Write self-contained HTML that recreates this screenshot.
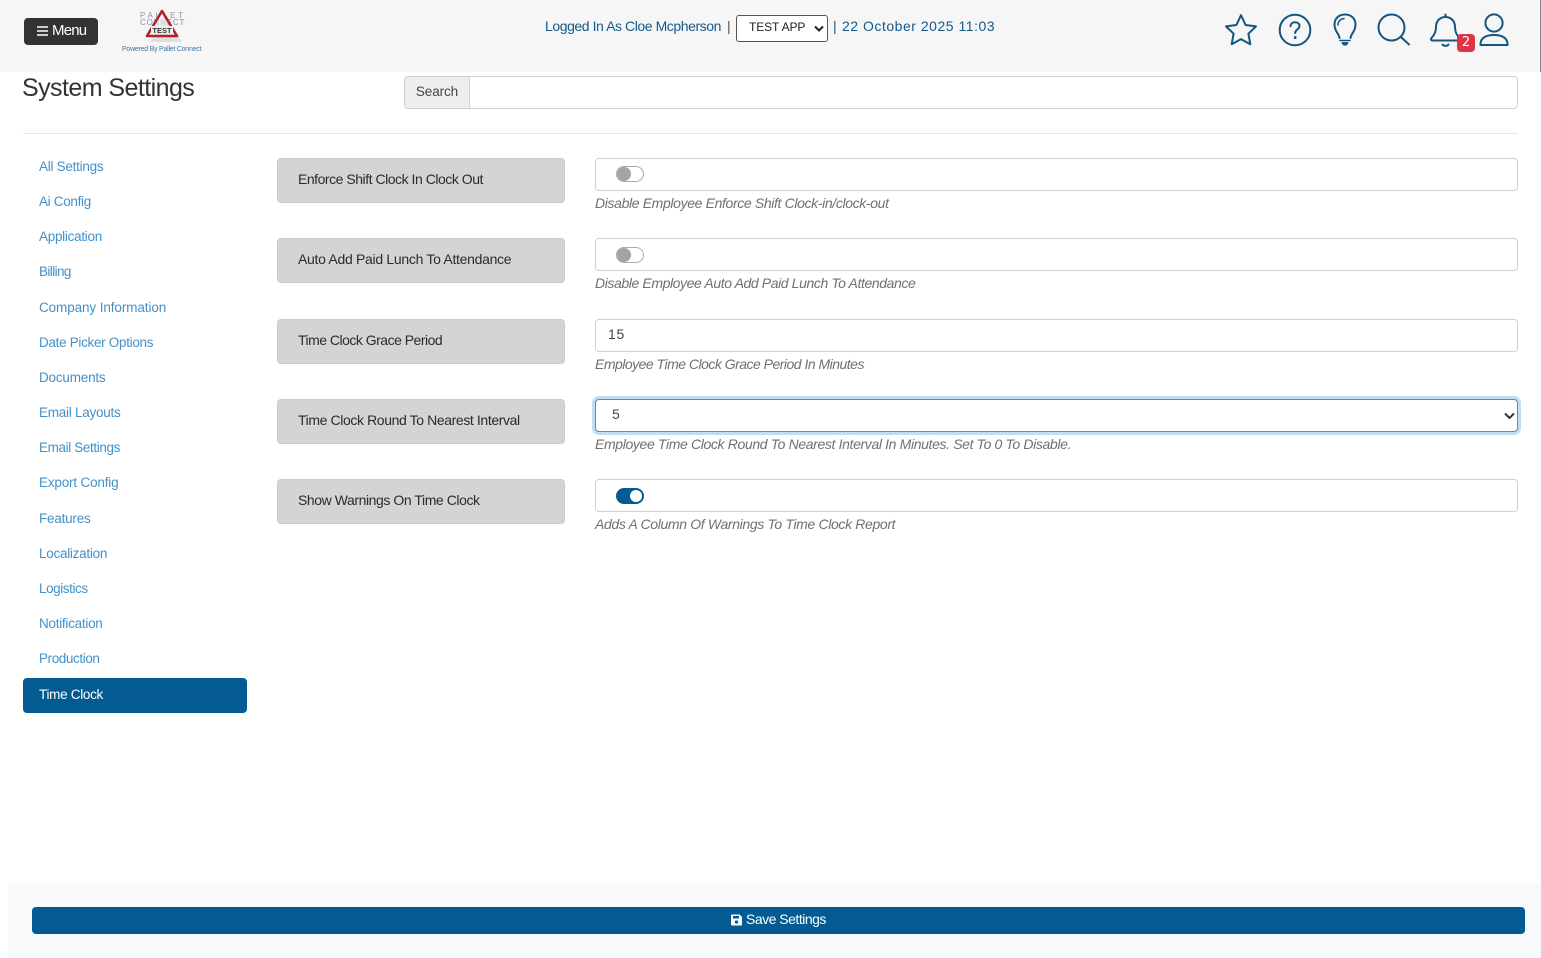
<!DOCTYPE html>
<html><head><meta charset="utf-8"><title>System Settings</title>
<style>
html,body{margin:0;padding:0;background:#fff}
body{width:1541px;height:958px;position:relative;overflow:hidden;font-family:"Liberation Sans",sans-serif;color:#333}
.a{position:absolute;white-space:nowrap}
.nav{position:absolute;left:39px;font-size:13.5px;line-height:18px;color:#4391c8;letter-spacing:-.1px}
.lab{position:absolute;left:277px;width:288px;height:45px;box-sizing:border-box;background:#d4d4d4;border:1px solid #ccc;border-radius:4px;font-size:14px;line-height:41px;padding-left:20px;color:#2b2b2b;letter-spacing:-.25px}
.box{position:absolute;left:595px;width:923px;height:33px;box-sizing:border-box;background:#fff;border:1px solid #d0d0d0;border-radius:4px}
.hint{position:absolute;left:595px;font-size:14px;line-height:18px;font-style:italic;color:#707070;letter-spacing:-.2px;white-space:nowrap}
.tg{position:absolute;left:20px;top:7px;width:28px;height:16px;box-sizing:border-box;border:1px solid #aaa;border-radius:8px;background:#fff}
.tg i{position:absolute;left:0;top:0;width:14px;height:14px;border-radius:50%;background:#a3a3a3}
.tg.on{background:#035b91;border-color:#035b91}
.tg.on i{left:13px;top:1px;width:12px;height:12px;background:#fff}
svg.ic{position:absolute;fill:none;stroke:#14557f;stroke-width:2;stroke-linecap:round;stroke-linejoin:round}
</style></head><body>
<div class="a" style="left:0;top:0;width:1541px;height:72px;background:#f6f6f6"></div>
<div class="a" style="left:1540px;top:0;width:1px;height:72px;background:#888"></div>

<div class="a" style="left:24px;top:18px;width:74px;height:27px;background:#333;border-radius:4px;color:#fff;font-size:15px;line-height:25px;letter-spacing:-.8px">
<svg style="position:absolute;left:13px;top:8px" width="11" height="10" viewBox="0 0 11 10"><path d="M0 1h11M0 5h11M0 9h11" stroke="#fff" stroke-width="1.4"/></svg>
<span style="position:absolute;left:28px;top:0">Menu</span></div>

<div class="a" style="left:140px;top:11px;font-size:8px;letter-spacing:2.8px;line-height:9px;color:#8b97a5">PALLET</div>
<div class="a" style="left:140px;top:18px;font-size:8px;letter-spacing:.8px;line-height:9px;color:#7b93ab">CONNECT</div>
<svg class="a" style="left:138px;top:6px" width="50" height="42" viewBox="0 0 50 42">
<path d="M26 7L42 34H10Z" fill="#aaa" opacity=".3" transform="translate(2,2)"/>
<path d="M24 5L39 30H9Z" fill="#f1f1f1" fill-opacity=".55" stroke="#b3202f" stroke-width="2.6" stroke-linejoin="round"/>
<rect x="13" y="20" width="22" height="7" fill="#efefef"/>
<text x="24" y="27" text-anchor="middle" font-family="Liberation Sans,sans-serif" font-size="7.5" font-weight="700" fill="#333">TEST</text></svg>
<div class="a" style="left:122px;top:45px;font-size:7px;line-height:9px;color:#3f77a6;letter-spacing:-.24px">Powered By Pallet Connect</div>

<div class="a" style="left:545px;top:17px;font-size:14px;line-height:18px;color:#14598a;letter-spacing:-.43px">Logged In As Cloe Mcpherson</div>
<div class="a" style="left:727px;top:17px;font-size:14px;line-height:18px;color:#555">|</div>
<div class="a" style="left:736px;top:15px;width:92px;height:27px;box-sizing:border-box;background:#fff;border:1px solid #555;border-radius:3px;font-size:12px;line-height:22px;padding-left:12px;color:#222;letter-spacing:-.1px">TEST APP
<svg style="position:absolute;left:77px;top:9px" width="10" height="8" viewBox="0 0 10 8"><path d="M1 1.5L5 5.5L9 1.5" fill="none" stroke="#222" stroke-width="2"/></svg></div>
<div class="a" style="left:833px;top:17px;font-size:14px;line-height:18px;color:#14598a">|</div>
<div class="a" style="left:842px;top:17px;font-size:14px;line-height:18px;color:#14598a;letter-spacing:.52px">22 October 2025 11:03</div>

<svg class="ic" style="left:1223px;top:12px" width="36" height="36" viewBox="0 0 36 36"><path d="M18 3.2L22.6 13L33 14.4L25.4 21.7L27.3 32.2L18 27.1L8.7 32.2L10.6 21.7L3 14.4L13.4 13Z"/></svg>
<svg class="ic" style="left:1278px;top:13px" width="34" height="34" viewBox="0 0 34 34"><circle cx="17" cy="17" r="15.3"/><path d="M12.5 13.2C12.7 10.5 14.6 9.3 17 9.3C19.6 9.3 21.5 10.8 21.5 13.1C21.5 16.3 17.2 16.4 17.2 20"/><path d="M17.2 24.3v.4" stroke-width="2.6"/></svg>
<svg class="ic" style="left:1330px;top:12px" width="30" height="36" viewBox="0 0 30 36"><path d="M9.5 26C9 21.5 4.5 19.5 4.5 12.5C4.5 6.5 8.8 2.5 15 2.5C21.2 2.5 25.5 6.5 25.5 12.5C25.5 19.5 21 21.5 20.5 26"/><path d="M8 13C8 9.5 10.5 6.8 14 6.5" stroke-width="1.5"/><path d="M10 28.5H20" stroke-width="1.6"/><path d="M12 30.5H18C17.8 32.3 16.6 33.2 15 33.2C13.4 33.2 12.2 32.3 12 30.5Z" fill="#14557f" stroke-width=".8"/></svg>
<svg class="ic" style="left:1375px;top:12px" width="38" height="36" viewBox="0 0 38 36"><circle cx="16.5" cy="15.5" r="13"/><path d="M26 25L34 32.5"/></svg>
<svg class="ic" style="left:1429px;top:13px" width="34" height="36" viewBox="0 0 34 36"><path d="M16.5 1.5V4"/><path d="M2 26C2 24.2 7 22.5 7 14C7 8 11 4 16.5 4C22 4 26 8 26 14C26 22.5 31 24.2 31 26C31 27 30.5 27.5 29.5 27.5H3.5C2.5 27.5 2 27 2 26Z"/><path d="M13.5 31.5C14.5 33.3 18.5 33.3 19.5 31.5"/></svg>
<div class="a" style="left:1457px;top:34px;width:18px;height:18px;background:#dc3545;border-radius:4px;color:#fff;font-size:13px;line-height:18px;text-align:center;font-family:'DejaVu Sans',sans-serif">2</div>
<svg class="ic" style="left:1478px;top:12px" width="32" height="36" viewBox="0 0 32 36"><circle cx="16" cy="11" r="8.6"/><path d="M2.5 33C2 26 8 23 16 23C24 23 30 26 29.5 33Z"/></svg>

<div class="a" style="left:22px;top:72px;font-size:25px;line-height:32px;color:#333;letter-spacing:-.56px">System Settings</div>

<div class="a" style="left:404px;top:76px;width:66px;height:33px;box-sizing:border-box;background:#eee;border:1px solid #d0d0d0;border-radius:4px 0 0 4px;font-size:13.5px;line-height:29px;text-align:center;color:#444;letter-spacing:-.1px">Search</div>
<div class="a" style="left:469px;top:76px;width:1049px;height:33px;box-sizing:border-box;background:#fff;border:1px solid #d0d0d0;border-radius:0 4px 4px 0"></div>
<div class="a" style="left:23px;top:133px;width:1495px;height:1px;background:#e6e6e6"></div>

<div class="nav" style="top:158px;letter-spacing:-.27px">All Settings</div>
<div class="nav" style="top:193px;letter-spacing:-.32px">Ai Config</div>
<div class="nav" style="top:228px;letter-spacing:-.28px">Application</div>
<div class="nav" style="top:263px;letter-spacing:-.6px">Billing</div>
<div class="nav" style="top:299px">Company Information</div>
<div class="nav" style="top:334px;letter-spacing:-.31px">Date Picker Options</div>
<div class="nav" style="top:369px;letter-spacing:-.2px">Documents</div>
<div class="nav" style="top:404px;letter-spacing:-.25px">Email Layouts</div>
<div class="nav" style="top:439px;letter-spacing:-.38px">Email Settings</div>
<div class="nav" style="top:474px;letter-spacing:-.18px">Export Config</div>
<div class="nav" style="top:510px;letter-spacing:-.22px">Features</div>
<div class="nav" style="top:545px;letter-spacing:-.27px">Localization</div>
<div class="nav" style="top:580px;letter-spacing:-.43px">Logistics</div>
<div class="nav" style="top:615px;letter-spacing:-.27px">Notification</div>
<div class="nav" style="top:650px;letter-spacing:-.4px">Production</div>
<div class="a" style="left:23px;top:678px;width:224px;height:35px;background:#035b91;border-radius:4px"></div>
<div class="nav" style="top:686px;color:#fff;letter-spacing:-.3px">Time Clock</div>

<div class="lab" style="top:158px;letter-spacing:-.47px">Enforce Shift Clock In Clock Out</div>
<div class="box" style="top:158px"><span class="tg"><i></i></span></div>
<div class="hint" style="top:194px;letter-spacing:-.36px">Disable Employee Enforce Shift Clock-in/clock-out</div>

<div class="lab" style="top:238px;letter-spacing:-.3px">Auto Add Paid Lunch To Attendance</div>
<div class="box" style="top:238px"><span class="tg" style="top:8px"><i></i></span></div>
<div class="hint" style="top:274px;letter-spacing:-.4px">Disable Employee Auto Add Paid Lunch To Attendance</div>

<div class="lab" style="top:319px;letter-spacing:-.51px">Time Clock Grace Period</div>
<div class="box" style="top:319px;font-size:14px;line-height:29px;padding-left:12px;color:#444;letter-spacing:.7px">15</div>
<div class="hint" style="top:355px;letter-spacing:-.51px">Employee Time Clock Grace Period In Minutes</div>

<div class="lab" style="top:399px;letter-spacing:-.39px">Time Clock Round To Nearest Interval</div>
<div class="box" style="top:399px;border-color:#4b93b8;box-shadow:0 0 0 3px #c0ddf2;font-size:14px;line-height:29px;padding-left:16px;color:#444">5
<svg style="position:absolute;left:908px;top:12px" width="11" height="9" viewBox="0 0 11 9"><path d="M1 1.5L5.5 6L10 1.5" fill="none" stroke="#333" stroke-width="2"/></svg></div>
<div class="hint" style="top:435px;letter-spacing:-.36px">Employee Time Clock Round To Nearest Interval In Minutes. Set To 0 To Disable.</div>

<div class="lab" style="top:479px;letter-spacing:-.43px">Show Warnings On Time Clock</div>
<div class="box" style="top:479px"><span class="tg on" style="top:8px"><i></i></span></div>
<div class="hint" style="top:515px;letter-spacing:-.35px">Adds A Column Of Warnings To Time Clock Report</div>

<div class="a" style="left:8px;top:883px;width:1533px;height:75px;background:#f8f9fa"></div>
<div class="a" style="left:32px;top:907px;width:1493px;height:27px;background:#035b91;border-radius:4px"></div>
<svg class="a" style="left:731px;top:914px" width="11" height="12" viewBox="0 0 11 12"><path d="M1 0.5H8.5L11 3V10.5C11 11.1 10.6 11.5 10 11.5H1C.4 11.5 0 11.1 0 10.5V1.5C0 .9.4.5 1 .5Z" fill="#fff"/><rect x="2" y="2" width="6" height="2.5" fill="#035b91"/><circle cx="5.5" cy="8" r="1.6" fill="#035b91"/></svg>
<div class="a" style="left:746px;top:910px;font-size:14px;line-height:18px;color:#fff;letter-spacing:-.5px">Save Settings</div>
</body></html>
